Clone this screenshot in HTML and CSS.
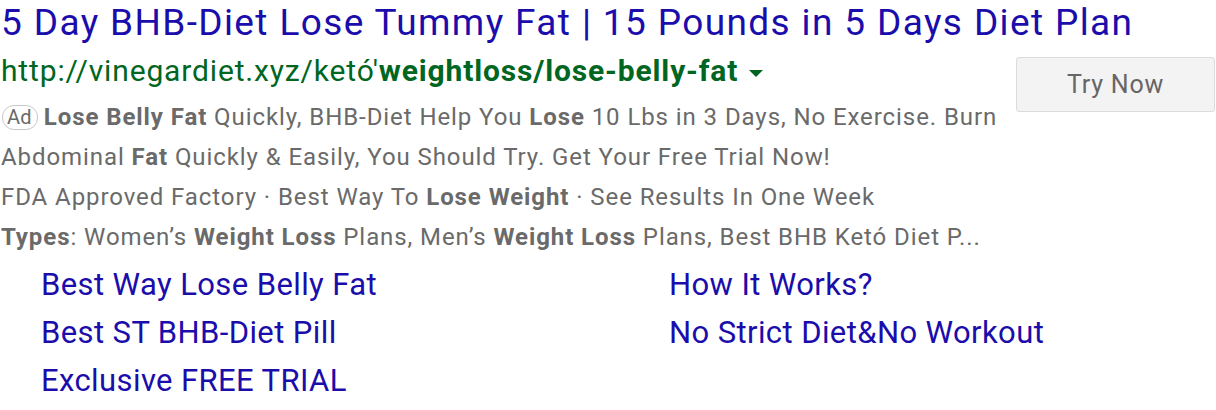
FILE: index.html
```html
<!DOCTYPE html>
<html>
<head>
<meta charset="utf-8">
<link rel="stylesheet" href="styles.css">
</head>
<body>
<div class="ad">
  <a class="title" href="#">5 Day BHB-Diet Lose Tummy Fat | 15 Pounds in 5 Days Diet Plan</a>
  <div class="main">
    <div class="body">
      <div class="url">http://vinegardiet.xyz/ketó'<b>weightloss/lose-belly-fat</b><span class="caret"></span></div>
      <div class="desc">
        <div class="line"><span class="badge">Ad</span> <b>Lose Belly Fat</b> Quickly, BHB-Diet Help You <b>Lose</b> 10 Lbs in 3 Days, No Exercise. Burn</div>
        <div class="line">Abdominal <b>Fat</b> Quickly &amp; Easily, You Should Try. Get Your Free Trial Now!</div>
        <div class="line">FDA Approved Factory · Best Way To <b>Lose Weight</b> · See Results In One Week</div>
        <div class="line"><b>Types</b>: Women’s <b>Weight Loss</b> Plans, Men’s <b>Weight Loss</b> Plans, Best BHB Ketó Diet P...</div>
      </div>
    </div>
    <button class="cta">Try Now</button>
  </div>
  <div class="sitelinks">
    <a href="#">Best Way Lose Belly Fat</a>
    <a href="#">How It Works?</a>
    <a href="#">Best ST BHB-Diet Pill</a>
    <a href="#">No Strict Diet&amp;No Workout</a>
    <a href="#">Exclusive FREE TRIAL</a>
  </div>
</div>
</body>
</html>
```
FILE: styles.css
```css
html, body {
  margin: 0;
  padding: 0;
  background: #fff;
}
body {
  font-family: Roboto, "Liberation Sans", sans-serif;
  width: 1216px;
  height: 410px;
  overflow: hidden;
}
.ad {
  padding: 0 0 0 1px;
}
a {
  text-decoration: none;
  color: #1a0dab;
}
.title {
  display: block;
  font-size: 37px;
  line-height: 46px;
  letter-spacing: 1.38px;
  white-space: nowrap;
}
.main {
  display: flex;
  align-items: flex-start;
}
.body {
  flex: 1;
}
.url {
  color: #006621;
  font-size: 30px;
  line-height: 44px;
  margin-top: 3px;
  letter-spacing: 0.85px;
  white-space: nowrap;
}
.url b {
  font-weight: 700;
}
.caret {
  display: inline-block;
  width: 0;
  height: 0;
  border-left: 7px solid transparent;
  border-right: 7px solid transparent;
  border-top: 7px solid #006621;
  margin-left: 11px;
  vertical-align: middle;
}
.desc {
  color: #6a6a6a;
  font-size: 24px;
  margin-top: 4px;
  letter-spacing: 0.92px;
}
.desc .line {
  line-height: 40px;
  white-space: nowrap;
}
.desc b {
  font-weight: 700;
}
.badge {
  display: inline-block;
  font-size: 20px;
  line-height: 23px;
  padding: 0 5px 0 4px;
  letter-spacing: 0.3px;
  border: 1px solid #c8c8c8;
  border-radius: 12px;
  color: #6a6a6a;
  vertical-align: 1px;
  margin-left: 1px;
  margin-right: -1px;
}
.cta {
  margin-top: 11px;
  margin-right: 1px;
  width: 199px;
  height: 55px;
  background: #f3f3f3;
  border: 1px solid #dcdcdc;
  border-radius: 3px;
  font-family: Roboto, "Liberation Sans", sans-serif;
  font-size: 25px;
  letter-spacing: 0.8px;
  color: #666;
  padding: 0;
}
.sitelinks {
  display: grid;
  grid-template-columns: 628px auto;
  padding-left: 40px;
  margin-top: 4px;
}
.sitelinks a {
  font-size: 31px;
  line-height: 48px;
  letter-spacing: 0.4px;
  white-space: nowrap;
}
```
